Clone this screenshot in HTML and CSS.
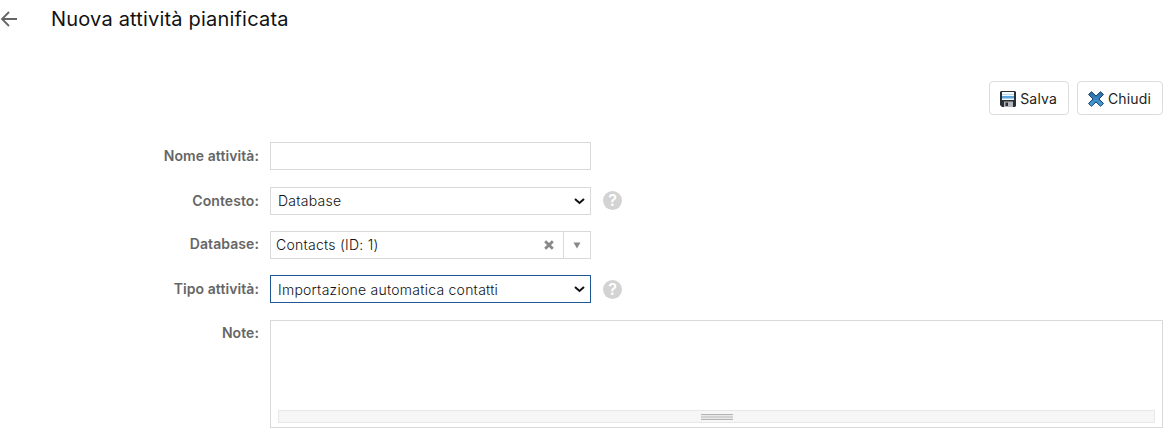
FILE: index.html
```html
<!DOCTYPE html>
<html lang="it">
<head>
    <meta charset="UTF-8">
    <meta name="viewport" content="width=device-width, initial-scale=1.0">
    <title>Nuova attività pianificata</title>
    <link rel="stylesheet" href="styles.css">
</head>
<body>
    <div class="header">
        <a href="#" class="back-link" aria-label="Indietro">
            <svg width="18" height="18" viewBox="0 0 18 18" fill="none" stroke="#666" stroke-width="1.8">
                <path d="M17 9H2.5M9 2L2 9l7 7"/>
            </svg>
        </a>
        <h1 class="title">Nuova attività pianificata</h1>
    </div>

    <div class="toolbar">
        <button type="button" class="button">
            <svg width="16" height="16" viewBox="0 0 16 16">
                <path d="M1 0h14l1 1v14l-1 1H2l-2-2V1z" fill="#2b2e33"/>
                <path d="M2 1h12v8H2z" fill="#f4f9fd"/>
                <path d="M2 3h12v1H2z" fill="#b5daf3"/>
                <path d="M2 5h12v2H2z" fill="#5ba5dc"/>
                <path d="M2 7h12v1H2z" fill="#a9d2ef"/>
                <path d="M4 10.500h9V16H4z" fill="#b4b8bc"/>
                <path d="M5.500 11.500H8V15H5.500z" fill="#2b2e33"/>
            </svg>
            <span>Salva</span>
        </button>
        <button type="button" class="button">
            <svg width="16" height="16" viewBox="0 0 16 16">
                <defs>
                    <linearGradient id="close-fill" x1="0" y1="0" x2="0" y2="1">
                        <stop offset="0" stop-color="#2a669c"/>
                        <stop offset="1" stop-color="#48a3df"/>
                    </linearGradient>
                </defs>
                <path d="M3.500 .7L8 5l4.500-4.300L15.500 3.500 11 8l4.500 4.500-3 2.800L8 11l-4.500 4.300-3-2.800L5 8 .5 3.500z" fill="url(#close-fill)" stroke="#17446f" stroke-linejoin="round"/>
            </svg>
            <span>Chiudi</span>
        </button>
    </div>

    <form class="task-form">
        <label for="task-name">Nome attività:</label>
        <div class="field">
            <input type="text" id="task-name" name="task-name" class="control">
        </div>

        <label for="context">Contesto:</label>
        <div class="field">
            <div class="select-box">
                <select id="context" name="context" class="control raised">
                    <option>Database</option>
                </select>
                <svg class="chevron" width="11" height="7" viewBox="0 0 11 7" fill="none" stroke="#111" stroke-width="2">
                    <path d="M1 1l4.500 4L10 1"/>
                </svg>
            </div>
            <span class="help">?</span>
        </div>

        <label for="database" class="raised">Database:</label>
        <div class="field">
            <div class="combo">
                <input type="text" id="database" name="database" value="Contacts (ID: 1)">
                <svg class="combo-clear" width="10" height="10" viewBox="0 0 10 10" stroke="#888" stroke-width="2.800">
                    <path d="M1.200 1.200l7.600 7.600M8.800 1.200L1.200 8.800"/>
                </svg>
                <div class="combo-toggle">
                    <svg width="8" height="7" viewBox="0 0 8 7">
                        <path d="M.5 .5h7L4 6.500z" fill="#888"/>
                    </svg>
                </div>
            </div>
        </div>

        <label for="task-type">Tipo attività:</label>
        <div class="field">
            <div class="select-box">
                <select id="task-type" name="task-type" class="control active">
                    <option>Importazione automatica contatti</option>
                </select>
                <svg class="chevron" width="11" height="7" viewBox="0 0 11 7" fill="none" stroke="#111" stroke-width="2">
                    <path d="M1 1l4.500 4L10 1"/>
                </svg>
            </div>
            <span class="help lowered">?</span>
        </div>

        <label for="notes" class="raised">Note:</label>
        <div class="notes-box">
            <textarea id="notes" name="notes"></textarea>
            <div class="resize-bar"><span class="grip"></span></div>
        </div>
    </form>
</body>
</html>
```

FILE: styles.css
```css
* {
    box-sizing: border-box;
}
body {
    margin: 0;
    padding: 0 5px 0 0;
    overflow: hidden;
    background-color: #fff;
    color: #222;
    font-family: Inter, "Liberation Sans", sans-serif;
    font-size: 14px;
}
.header {
    display: flex;
    align-items: center;
    height: 38px;
}
.back-link {
    display: flex;
    width: 51px;
}
.title {
    margin: 0;
    font-size: 20px;
    font-weight: 400;
    letter-spacing: 0.19px;
    color: #111;
}
.toolbar {
    display: flex;
    justify-content: flex-end;
    gap: 8px;
    padding-top: 43px;
}
.button {
    display: flex;
    align-items: center;
    gap: 4px;
    height: 34px;
    padding: 1px 11px 0 10px;
    border: 1px solid #dcdcdc;
    border-radius: 4px;
    background-color: #fff;
    color: #222;
    font: inherit;
    letter-spacing: 0.15px;
    cursor: pointer;
}
.button svg {
    margin-top: 1px;
}
.task-form {
    display: grid;
    grid-template-columns: 259px 1fr;
    grid-template-rows: 45px 44px 44px 45px 108px;
    column-gap: 11px;
    padding-top: 27px;
}
.task-form label {
    height: 28px;
    line-height: 28px;
    text-align: right;
    font-weight: 600;
    letter-spacing: 0.08px;
    color: #666;
}
.task-form label.raised {
    line-height: 26px;
}
.field {
    display: flex;
    align-items: flex-start;
    gap: 12px;
}
.control {
    display: block;
    width: 321px;
    height: 28px;
    padding: 0 7px;
    border: 1px solid #d9d9d9;
    border-radius: 0;
    outline: none;
    background-color: #fff;
    color: #111;
    font: 300 14px Inter, "Liberation Sans", sans-serif;
    letter-spacing: 0.25px;
    appearance: none;
}
.control.raised {
    padding-bottom: 2px;
}
.control.active {
    border-color: #1f5694;
}
.select-box {
    position: relative;
}
.chevron {
    position: absolute;
    top: 11px;
    right: 6px;
    pointer-events: none;
}
.help {
    width: 19px;
    height: 19px;
    margin-top: 4px;
    border-radius: 50%;
    background-color: #d3d3d3;
    color: #fff;
    font-size: 16px;
    font-weight: 600;
    line-height: 19px;
    text-align: center;
}
.help.lowered {
    margin-top: 5px;
}
.combo {
    display: flex;
    align-items: center;
    width: 321px;
    height: 28px;
    border: 1px solid #d9d9d9;
}
.combo input {
    flex: 1;
    min-width: 0;
    padding: 0 5px 1px;
    border: 0;
    outline: none;
    color: #111;
    font: 300 14px Inter, "Liberation Sans", sans-serif;
    letter-spacing: 0.25px;
}
.combo-clear {
    margin-right: 9px;
}
.combo-toggle {
    display: flex;
    align-items: center;
    justify-content: center;
    width: 27px;
    height: 26px;
    border-left: 1px solid #d9d9d9;
}
.notes-box {
    display: flex;
    flex-direction: column;
    height: 108px;
    padding: 0 7px 4px;
    border: 1px solid #d9d9d9;
}
.notes-box textarea {
    flex: 1;
    padding: 7px 0;
    border: 0;
    outline: none;
    resize: none;
    font: inherit;
}
.resize-bar {
    display: flex;
    align-items: center;
    justify-content: center;
    height: 13px;
    border: 1px solid #e8e8e8;
    background-color: #f6f6f6;
}
.grip {
    width: 32px;
    height: 6px;
    border-top: 1px solid #b5b5b5;
    border-bottom: 1px solid #b5b5b5;
    background: linear-gradient(#e8e8e8 1px, #d3d3d3 1px, #d3d3d3 3px, #e8e8e8 3px);
}
```
